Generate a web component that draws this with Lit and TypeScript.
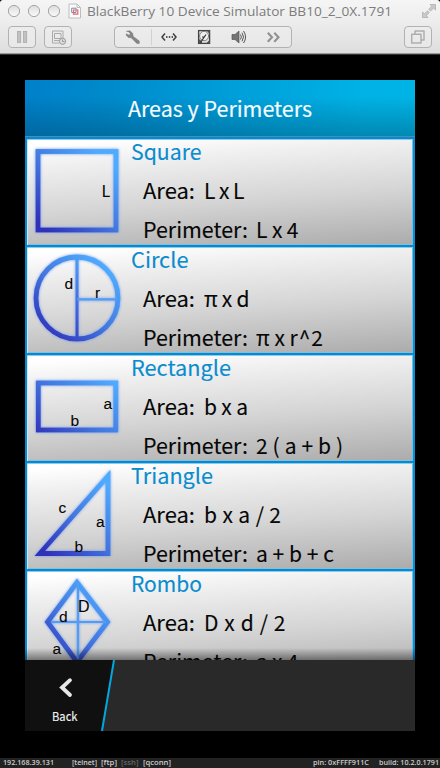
import { LitElement, html, svg, css, TemplateResult } from "lit";
import { customElement, property } from "lit/decorators.js";

/** A line of text set to an exact measure. */
@customElement("fit-text")
class FitText extends LitElement {
  @property() text = "";
  @property({ type: Number }) measure = 0;
  @property() adjust = "spacingAndGlyphs";
  static styles = css`
    :host { display: block; height: 1em; line-height: 1; }
    svg { display: block; overflow: visible; width: 100%; height: 1em; }
    text { fill: currentColor; stroke: currentColor; stroke-width: var(--weight, 0); white-space: pre; }
  `;
  render() {
    return html`<svg style="width:${this.measure}px"><text y="0.85em" textLength=${this.measure} lengthAdjust=${this.adjust}>${this.text}</text></svg>`;
  }
}

interface Shape {
  name: string;
  nameWidth: number;
  area: string;
  areaWidth: number;
  perimeter: string;
  perimeterWidth: number;
  art: TemplateResult;
}

const fitted = (cls: string, text: string, measure: number, adjust = "spacingAndGlyphs") =>
  html`<fit-text class=${cls} .text=${text} .measure=${measure} .adjust=${adjust}></fit-text>`;

const shapes: Shape[] = [
  {
    name: "Square", nameWidth: 70.5, area: "L x L", areaWidth: 40.5, perimeter: "L x 4", perimeterWidth: 42.5,
    art: svg`<g class="glow"><rect x="11" y="12.5" width="78" height="78.5" class="thick"/></g>
      <text x="74.5" y="58" class="slate">L</text>`,
  },
  {
    name: "Circle", nameWidth: 57.5, area: "π x d", areaWidth: 45.5, perimeter: "π x r^2", perimeterWidth: 67,
    art: svg`<g class="glow"><circle cx="50" cy="51" r="41" class="thick"/>
      <path d="M50 12V90" class="thin"/><path d="M50 52.3H90" class="pale"/></g>
      <text x="37.5" y="41.5">d</text><text x="68" y="50.5">r</text>`,
  },
  {
    name: "Rectangle", nameWidth: 100, area: "b x a", areaWidth: 44, perimeter: "2 ( a + b )", perimeterWidth: 87,
    art: svg`<g class="glow"><rect x="11.3" y="28" width="77.5" height="47" class="thick"/></g>
      <text x="76.5" y="54">a</text><text x="43.5" y="71">b</text>`,
  },
  {
    name: "Triangle", nameWidth: 82, area: "b x a / 2", areaWidth: 77, perimeter: "a + b + c", perimeterWidth: 78,
    art: svg`<g class="glow"><path d="M12.8 90.5H81V13Z" class="thick sharp"/></g>
      <text x="31.5" y="50">c</text><text x="69" y="63.5">a</text><text x="47.5" y="88.5">b</text>`,
  },
  {
    name: "Rombo", nameWidth: 71, area: "D x d / 2", areaWidth: 81.5, perimeter: "a x 4", perimeterWidth: 42.5,
    art: svg`<g class="glow"><path d="M50 11.500L80.5 51L50 91L20.5 51Z" class="thick sharp"/>
      <path d="M51 13V88M24 51H79" class="pale"/></g>
      <text x="51" y="41" class="big">D</text><text x="32" y="50.500">d</text><text x="25.500" y="82.500">a</text>`,
  },
];

@customElement("shape-row")
class ShapeRow extends LitElement {
  @property({ attribute: false }) shape!: Shape;
  static styles = css`
    :host { display: block; height: 108px; box-sizing: border-box; flex: none;
      border-top: 2px solid #058ad0; border-left: 2px solid #058ad0; border-right: 2px solid #0b8dd2;
      background: #b0b0b0; }
    .body { display: grid; grid-template-columns: 104px 1fr; height: 106px; box-sizing: border-box;
      background: linear-gradient(176deg, #fff 5%, #f1f1f1 20%, #d4d4d4 58%, #acacac 99%);
      box-shadow: inset 0 1px #8ccbec, inset 1px 0 #cce7f5, inset -1px 0 #6fc0e8, inset 0 -1px #7fbfe0; }
    .art { display: block; width: 104px; height: 106px; overflow: visible; }
    .art text { font: 15.5px "Liberation Sans", Arial, sans-serif; fill: #050505; stroke: #050505; stroke-width: .1; }
    .art .slate { font: 16px "Noto Sans CJK SC", sans-serif; }
    .art .big { font-size: 16px; }
    .thick { fill: none; stroke: url(#ink); stroke-width: 4.8; stroke-linejoin: miter; }
    .thin { fill: none; stroke: url(#down); stroke-width: 3; }
    .pale { fill: none; stroke: #529cf3; stroke-width: 2.2; }
    .glow { filter: drop-shadow(0 0 1.4px #6a9af0); }
    .copy { display: flex; flex-direction: column; font: 21px "Noto Sans CJK SC", "Noto Sans", sans-serif; color: #060606; padding-top: 3px; --weight: .12px; }
    .name { color: #098cce; }
    .line { display: flex; margin: 18px 0 0 12px; height: 21px; }
    .area { width: 61px; }
    .perimeter { width: 113px; }
    .value { flex: none; word-spacing: -2px; }
  `;
  render() {
    const s = this.shape;
    return html`<div class="body">
      <svg class="art">
        <defs>
          <linearGradient id="ink" gradientUnits="userSpaceOnUse" x1="18" y1="90" x2="80" y2="20">
            <stop offset="0" stop-color="#3030b8"/><stop offset=".5" stop-color="#4377df"/><stop offset="1" stop-color="#4eacff"/>
          </linearGradient>
          <linearGradient id="down" gradientUnits="userSpaceOnUse" x1="0" y1="14" x2="0" y2="92">
            <stop offset="0" stop-color="#4d9af6"/><stop offset="1" stop-color="#3d45c5"/>
          </linearGradient>
        </defs>
        ${s.art}
      </svg>
      <div class="copy">
        ${fitted("name", s.name, s.nameWidth)}
        <div class="line">${fitted("area", "Area:", 52)}${fitted("value", s.area, s.areaWidth, "spacing")}</div>
        <div class="line">${fitted("perimeter", "Perimeter:", 105)}${fitted("value", s.perimeter, s.perimeterWidth, "spacing")}</div>
      </div>
    </div>`;
  }
}

@customElement("app-root")
class AppRoot extends LitElement {
  static styles = css`
    :host { display: flex; flex-direction: column; width: 440px; height: 768px; background: #000; overflow: hidden; }
    .chrome { height: 54px; box-sizing: border-box; border-bottom: 1px solid #999; flex: none;
      background: linear-gradient(#f5f5f5, #ececec 45%, #dedede); border-radius: 3px 3px 0 0; box-shadow: 0 1px #333; }
    .chrome svg { display: block; }
    .chrome text { font: 13.5px "Open Sans", "Noto Sans", sans-serif; fill: #7c7c7c; }
    .device { width: 390px; height: 651px; margin: 26px 0 0 25px; display: flex; flex-direction: column; flex: none; overflow: hidden; }
    header { height: 57px; box-sizing: border-box; flex: none; display: flex; align-items: center; justify-content: center; color: #f7fcff;
      font: 21px "Noto Sans CJK SC", sans-serif; border-bottom: 1px solid #438fb7; --weight: .15px;
      background: linear-gradient(#0000 30%, #00344e55), linear-gradient(100deg, #0080c9 0%, #0089cb 20%, #00a0db 55%, #00b2e5 85%, #00b4e6); }
    header fit-text { margin-top: 2px; width: 184px; }
    main { height: 523px; flex: none; overflow: hidden; display: flex; flex-direction: column; position: relative; }
    main::after { content: ""; position: absolute; inset: auto 0 0 0; height: 12px; background: linear-gradient(#0000, #0000006b); }
    footer { height: 71px; background: #292929; flex: none; }
    footer svg { display: block; }
    footer text { font: 12px "Noto Sans CJK SC", sans-serif; fill: #f1f1f1; stroke: #f1f1f1; stroke-width: .15; }
    .status { margin-top: 27px; height: 10px; background: #222; display: flex; flex: none; box-sizing: border-box;
      font: 600 7.2px "Open Sans", "Noto Sans", sans-serif; color: #ccc; padding: 1.2px 1px 0 2.5px; }
    .dim { color: #666; }
    .ip { width: 69px; } .telnet { width: 29px; } .ftp { width: 20.5px; } .ssh { width: 21.5px; } .qconn { width: 170.5px; }
    .pin { width: 66px; } .build { width: 60px; }
  `;
  render() {
    return html`
      <div class="chrome">
        <svg width="440" height="53" viewBox="0 0 440 53" fill="none">
          <defs>
            <linearGradient id="lamp" x2="0" y2="1"><stop stop-color="#ddd"/><stop offset="1" stop-color="#fafafa"/></linearGradient>
          </defs>
          <g fill="url(#lamp)" stroke="#a5a5a5"><circle cx="14" cy="11" r="5.6"/><circle cx="34" cy="11" r="5.6"/><circle cx="54" cy="11" r="5.6"/></g>
          <path d="M69 4H77L80.5 7.500V18H69Z" fill="#fbfbfb" stroke="#bcbcbc"/><path d="M77 4V7.500H80.500" stroke="#bcbcbc"/>
          <path d="M71.700 8.200H76V12.500H71.700Z" stroke="#6e91ae"/><path d="M73.500 10H77.800V14.200H73.500Z" stroke="#e56774" stroke-width="1.200"/>
          <text x="87" y="16" textLength="305" lengthAdjust="spacingAndGlyphs">BlackBerry 10 Device Simulator BB10_2_0X.1791</text>
          <path d="M430 4.500H435.500V10L433.500 8.200L430.500 11L428.700 9.200L431.700 6.300ZM422.500 17.500V12L424.500 13.800L427.500 10.800L429.300 12.600L426.300 15.700L428.200 17.500Z" fill="#c9c9c9" stroke="#aaa" stroke-width=".7"/>
          <g stroke="#b2b2b2" fill="#eeeeee88">
            <rect x="8.500" y="26.500" width="27" height="21" rx="3.500"/><rect x="44.500" y="26.500" width="27" height="21" rx="3.500"/>
            <rect x="114.500" y="26.500" width="177" height="21" rx="3.500"/><rect x="404.500" y="26.500" width="27" height="21" rx="3.500"/>
          </g>
          <path d="M151.500 29V45" stroke="#d1d1d1"/>
          <g fill="#c1c1c1" stroke="#aaa" stroke-width=".8"><rect x="17.500" y="31.500" width="3.200" height="11"/><rect x="23.500" y="31.500" width="3.200" height="11"/></g>
          <path d="M52.500 31H63V38M52.500 31V43H59M54.500 33.500H61V38.500H54.500ZM54 40.500H59" stroke="#aaa"/>
          <circle cx="62.500" cy="41.300" r="3.100" fill="#ddd" stroke="#999"/><path d="M62.500 39.500V41.500H64.500" stroke="#888" stroke-width=".8"/>
          <path d="M126.500 31.200L130 30.800L132.800 33.500L133 36.300L139.300 41.100V43.400H136.800L131.300 37.800L128.300 37.500L126 35L126.400 33.800L129 35.200L130.400 33.900L129 31.900Z" fill="#858585" stroke="#777" stroke-width=".5"/>
          <path d="M165 33.500L162 37L165 40.500M173 33.500L176 37L173 40.500" stroke="#3e3e3e" stroke-width="1.500"/>
          <path d="M166 36H167.500V38H166ZM168.800 36H170.300V38H168.800ZM171.600 36H173V38H171.600Z" fill="#555"/>
          <rect x="198.600" y="30.600" width="11" height="12.800" fill="#e2e2e2" stroke="#444" stroke-width="1.300"/>
          <path d="M199 43V39L202 41.500V43ZM207 31H209.500V34ZM209.500 43V40L206.500 43Z" fill="#555"/>
          <ellipse cx="204.100" cy="36" rx="4.500" ry="4.700" fill="#eee" stroke="#666" stroke-width=".8"/><path d="M200.500 42.500L206 34.500M202 37H204" stroke="#333" stroke-width="1.200"/>
          <path d="M232 34.500H235L239 31V43L235 39.500H232Z" fill="#747474" stroke="#555" stroke-width=".7"/>
          <path d="M240.500 34.500Q242.200 37 240.500 39.500M242 32.700Q245 37 242 41.300M243.600 31Q247.500 37 243.600 43" stroke="#555"/>
          <path d="M267.800 32.700L272 37.200L267.800 41.700M274.300 32.700L278.500 37.200L274.300 41.700" stroke="#919191" stroke-width="2.100"/>
          <path d="M415 33.500V31H424V40H421.500M411.700 34.200H421V43H411.700Z" stroke="#aeaeae" stroke-width="1.500" stroke-linejoin="round"/>
        </svg>
      </div>
      <div class="device">
        <header><fit-text .text=${"Areas y Perimeters"} .measure=${184}></fit-text></header>
        <main>${shapes.map((s) => html`<shape-row .shape=${s}></shape-row>`)}</main>
        <footer>
          <svg width="390" height="71" fill="none">
            <path d="M0 0H89L77 71H0Z" fill="#101010"/><path d="M89 0L77 71" stroke="#02a7dd" stroke-width="2"/>
            <path d="M45 20.200L37 27.500L45 35" stroke="#e7e7e7" stroke-width="3.800" stroke-linecap="round"/>
            <text x="27" y="61" textLength="25.500" lengthAdjust="spacingAndGlyphs">Back</text>
          </svg>
        </footer>
      </div>
      <div class="status">
        ${fitted("ip", "192.168.39.131", 51)}${fitted("telnet", "[telnet]", 25)}${fitted("ftp", "[ftp]", 16)}
        ${fitted("ssh dim", "[ssh]", 17.500)}${fitted("qconn", "[qconn]", 28)}${fitted("pin", "pin: 0xFFFF911C", 56)}${fitted("build", "build: 10.2.0.1791", 60)}
      </div>`;
  }
}
